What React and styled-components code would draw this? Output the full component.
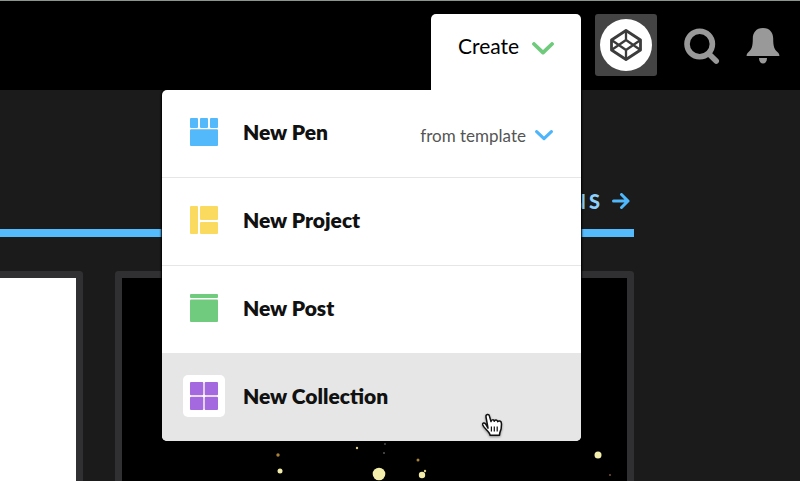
import { createGlobalStyle, styled } from "styled-components";

const sparks = [
  { x: 156, y: 177, r: 1.7, color: "#a98238" },
  { x: 158, y: 193, r: 2.5, color: "#f1eca9" },
  { x: 235, y: 170, r: 1.2, color: "#d8cb86" },
  { x: 257, y: 196, r: 6.3, color: "#f3eeab" },
  { x: 263, y: 166, r: 0.9, color: "#555555" },
  { x: 262, y: 175, r: 1, color: "#555555" },
  { x: 296, y: 182, r: 1.5, color: "#a98238" },
  { x: 303, y: 193, r: 1.2, color: "#d8cb86" },
  { x: 300, y: 197, r: 3.2, color: "#f1eca9" },
  { x: 476, y: 177, r: 3.5, color: "#f3eeab" },
  { x: 488, y: 197, r: 0.9, color: "#8a5a3c" },
];

const items = [
  {
    label: "New Pen",
    color: "#54b9fb",
    shapes: [
      [0, 0, 8, 10],
      [10, 0, 8, 10],
      [20, 0, 8, 10],
      [0, 11.3, 28, 16.7],
    ],
    template: true,
  },
  {
    label: "New Project",
    color: "#fadb5f",
    shapes: [
      [0, 0, 8, 28],
      [10, 0, 18, 14],
      [10, 16, 18, 12],
    ],
  },
  {
    label: "New Post",
    color: "#70cb7f",
    shapes: [
      [0, 0, 28, 4],
      [0, 5.5, 28, 22.5],
    ],
  },
  {
    label: "New Collection",
    color: "#a468df",
    shapes: [
      [0, 0, 13.3, 13.3],
      [14.7, 0, 13.3, 13.3],
      [0, 14.7, 13.3, 13.3],
      [14.7, 14.7, 13.3, 13.3],
    ],
    active: true,
  },
];

function Chevron({ width, color }) {
  return (
    <svg width={width} viewBox="0 0 22 13" fill="none" aria-hidden="true">
      <path
        d="M2 2L11 10.6L20 2"
        stroke={color}
        strokeWidth="3.8"
        strokeLinecap="round"
        strokeLinejoin="round"
      />
    </svg>
  );
}

function HandCursor() {
  return (
    <Cursor width="22" height="25" viewBox="0 0 22 25" aria-hidden="true">
      <path
        d="M7 15.2L5 4C4.6 1.2 7.9.6 8.5 3.2L10 8.6C10.2 6.4 12.9 6.3 13.3 8.3C13.8 6.5 16.4 6.8 16.7 8.7C17.4 7.5 20.6 7.5 20.5 11L20.2 15.2C20 17.3 18.5 18.8 18.5 22.3H9.2C8.6 18.7 3.1 15.6 1.8 12C1.1 9.7 3.4 9.3 4.6 11Z"
        fill="white"
        stroke="#111"
        strokeWidth="1.5"
        strokeLinejoin="round"
      />
      <path
        d="M10.4 13.4V18.6M13.3 13.4V18.6M16.2 13.4V18.6"
        stroke="#111"
        strokeWidth="1.2"
      />
    </Cursor>
  );
}

export default function App() {
  return (
    <Page>
      <GlobalStyle />
      <Header>
        <CreateWrapper>
          <CreateButton type="button" aria-expanded="true">
            Create
            <Chevron width={22} color="#6fcb7c" />
          </CreateButton>
          <Menu>
            {items.map((item) => (
              <MenuRow key={item.label} $active={item.active}>
                <MenuButton type="button">
                  <IconBox>
                    <svg width="28" height="28" viewBox="0 0 28 28">
                      {item.shapes.map(([x, y, w, h]) => (
                        <rect
                          key={`${x}-${y}`}
                          x={x}
                          y={y}
                          width={w}
                          height={h}
                          rx="1"
                          fill={item.color}
                        />
                      ))}
                    </svg>
                  </IconBox>
                  {item.label}
                </MenuButton>
                {item.template && (
                  <TemplateButton type="button">
                    from template
                    <Chevron width={18} color="#4db5fa" />
                  </TemplateButton>
                )}
                {item.active && <HandCursor />}
              </MenuRow>
            ))}
          </Menu>
        </CreateWrapper>
        <AvatarButton type="button" aria-label="Profile">
          <Avatar>
            <svg
              width="32"
              height="32"
              viewBox="0 0 32 32"
              fill="none"
              stroke="#3c3c3c"
              strokeLinejoin="round"
            >
              <path d="M16 1.5L30.5 11V21L16 30.5L1.5 21V11Z" strokeWidth="2.8" />
              <path
                d="M16 1.5V11M16 21V30.5M1.5 11L16 21L30.5 11M1.5 21L16 11L30.5 21"
                strokeWidth="2.3"
              />
            </svg>
          </Avatar>
        </AvatarButton>
        <IconButton type="button" aria-label="Search">
          <svg width="36" height="36" viewBox="0 0 36 36" fill="none">
            <circle cx="15.7" cy="16" r="12.7" stroke="#999" strokeWidth="5.6" />
            <path
              d="M25 26L32.2 33"
              stroke="#999"
              strokeWidth="5.6"
              strokeLinecap="round"
            />
          </svg>
        </IconButton>
        <IconButton type="button" aria-label="Notifications">
          <svg width="34" height="36" viewBox="0 0 34 36" fill="#999">
            <path d="M17 0C10 0 6.8 5 6.8 10.5C6.8 19 5.5 21.5 2.6 24C1 25.5.6 26.5.6 28H33.4C33.4 26.5 33 25.5 31.4 24C28.5 21.5 27.2 19 27.2 10.5C27.2 5 24 0 17 0Z" />
            <path d="M13 30H21C21 37.4 13 37.4 13 30Z" />
          </svg>
        </IconButton>
      </Header>
      <Main>
        <SectionHeader>
          <SectionLink href="#pens">
            Pens
            <svg width="18" height="16" viewBox="0 0 18 16" fill="none">
              <path
                d="M1.5 8H16M9.5 1.5L16 8L9.5 14.5"
                stroke="#4fb7fb"
                strokeWidth="3"
                strokeLinecap="round"
                strokeLinejoin="round"
              />
            </svg>
          </SectionLink>
        </SectionHeader>
        <Cards>
          <BlankCard />
          <DarkCard>
            <svg width="505" height="203" viewBox="0 0 505 203">
              {sparks.map((s) => (
                <circle
                  key={`${s.x}-${s.y}`}
                  cx={s.x}
                  cy={s.y}
                  r={s.r}
                  fill={s.color}
                />
              ))}
            </svg>
          </DarkCard>
        </Cards>
      </Main>
    </Page>
  );
}

// Styles
const GlobalStyle = createGlobalStyle`
  * {
    box-sizing: border-box;
  }
  body {
    margin: 0;
    background: #1b1b1b;
    font-family: "Lato", sans-serif;
    font-variant-ligatures: none;
  }
  button {
    padding: 0;
    border: none;
    background: none;
    font-family: inherit;
    cursor: pointer;
  }
  svg {
    display: block;
    flex-shrink: 0;
  }
`;

const Page = styled.div`
  display: flex;
  flex-direction: column;
  min-height: 100vh;
`;

const Header = styled.header`
  display: flex;
  justify-content: flex-end;
  align-items: flex-start;
  padding: 13px 20px 0 0;
  background: black;
  border-top: 1px solid #8d9490;
`;

const CreateWrapper = styled.div`
  position: relative;
  margin-right: 14px;
`;

const CreateButton = styled.button`
  display: flex;
  align-items: flex-start;
  gap: 13px;
  width: 150px;
  height: 76px;
  padding: 20px 0 0 27px;
  border-radius: 5px 5px 0 0;
  background: white;
  color: black;
  font-size: 21px;
  line-height: 24px;

  svg {
    margin-top: 8px;
  }
`;

const Menu = styled.ul`
  position: absolute;
  top: 100%;
  right: 0;
  z-index: 1;
  width: 419px;
  margin: 0;
  padding: 0;
  list-style: none;
  background: white;
  border-radius: 5px 0 5px 5px;
  box-shadow: 0 0 2px 1px black;
  clip-path: inset(0 -4px -4px -4px);
`;

const MenuRow = styled.li`
  position: relative;
  display: flex;
  justify-content: space-between;
  background: ${(props) => (props.$active ? "#e6e6e6" : "transparent")};
  border-bottom: 1px solid #e6e6e6;

  &:last-child {
    border-bottom: none;
    border-radius: 0 0 5px 5px;
  }
`;

const MenuButton = styled.button`
  display: flex;
  flex: 1;
  align-items: center;
  gap: 18px;
  padding: 21px 0 24px 21px;
  color: #111;
  font-size: 21px;
  font-weight: 800;
  line-height: 26px;
`;

const IconBox = styled.span`
  padding: 7px;
  border-radius: 5px;
  background: white;
`;

const TemplateButton = styled.button`
  display: flex;
  align-items: center;
  gap: 9px;
  padding: 4px 28px 0 0;
  color: #555;
  font-size: 17px;
`;

const Cursor = styled.svg`
  position: absolute;
  right: 78px;
  bottom: 3px;
  filter: drop-shadow(0 1px 1px rgba(0, 0, 0, 0.4));
`;

const AvatarButton = styled.button`
  display: grid;
  place-items: center;
  width: 62px;
  height: 62px;
  margin-right: 27px;
  background: #444;
  border-radius: 3px;
`;

const Avatar = styled.span`
  display: grid;
  place-items: center;
  width: 52px;
  height: 52px;
  border-radius: 50%;
  background: white;
`;

const IconButton = styled.button`
  margin-top: 14px;

  & + & {
    margin-left: 26px;
  }
`;

const Main = styled.main`
  display: flex;
  flex: 1;
  flex-direction: column;
  margin-right: 166px;
`;

const SectionHeader = styled.div`
  display: flex;
  justify-content: flex-end;
  padding: 99px 4px 16px 0;
  border-bottom: 8px solid #54bbfd;
`;

const SectionLink = styled.a`
  display: flex;
  align-items: center;
  gap: 9px;
  color: #8dd0fb;
  font-size: 20px;
  font-weight: 900;
  line-height: 24px;
  letter-spacing: 3px;
  text-decoration: none;
  text-transform: uppercase;
`;

const Cards = styled.div`
  display: flex;
  flex: 1;
  gap: 32px;
  margin-top: 34px;
`;

const Card = styled.article`
  border: 7px solid #303032;
  border-bottom: none;
  border-radius: 4px 4px 0 0;
`;

const BlankCard = styled(Card)`
  width: 83px;
  border-left: none;
  border-top-left-radius: 0;
  background: white;
`;

const DarkCard = styled(Card)`
  flex: 1;
  min-width: 0;
  overflow: hidden;
  background: black;
`;
